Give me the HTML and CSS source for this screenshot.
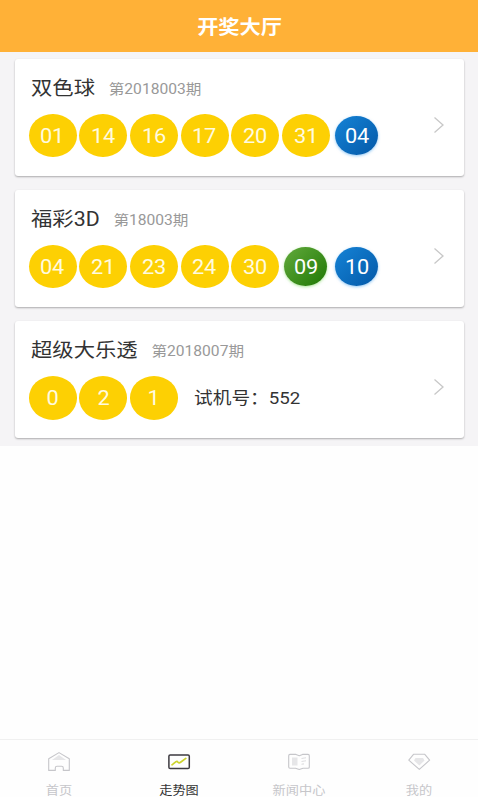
FILE: index.html
```
<!DOCTYPE html>
<html lang="zh-CN">
<head>
    <meta charset="UTF-8">
    <meta name="viewport" content="width=device-width, initial-scale=1.0">
    <title>开奖大厅</title>
    <link rel="stylesheet" href="styles.css">
</head>
<body>
    <header class="header">
        <h1>开奖大厅</h1>
    </header>

    <main class="list">
        <section class="card">
            <div class="card-head">
                <h2>双色球</h2>
                <span class="issue">第2018003期</span>
            </div>
            <div class="balls">
                <span class="ball"><b>01</b></span>
                <span class="ball"><b>14</b></span>
                <span class="ball"><b>16</b></span>
                <span class="ball"><b>17</b></span>
                <span class="ball"><b>20</b></span>
                <span class="ball"><b>31</b></span>
                <span class="ball small blue"><b>04</b></span>
            </div>
            <svg class="arrow" viewBox="0 0 12 18"><path d="M1.5 1.5 L10 9 L1.5 16.5"/></svg>
        </section>

        <section class="card">
            <div class="card-head">
                <h2>福彩3D</h2>
                <span class="issue">第18003期</span>
            </div>
            <div class="balls">
                <span class="ball"><b>04</b></span>
                <span class="ball"><b>21</b></span>
                <span class="ball"><b>23</b></span>
                <span class="ball"><b>24</b></span>
                <span class="ball"><b>30</b></span>
                <span class="ball small green"><b>09</b></span>
                <span class="ball small blue"><b>10</b></span>
            </div>
            <svg class="arrow" viewBox="0 0 12 18"><path d="M1.5 1.5 L10 9 L1.5 16.5"/></svg>
        </section>

        <section class="card">
            <div class="card-head">
                <h2>超级大乐透</h2>
                <span class="issue">第2018007期</span>
            </div>
            <div class="balls">
                <span class="ball"><b>0</b></span>
                <span class="ball"><b>2</b></span>
                <span class="ball"><b>1</b></span>
                <span class="test-num">试机号：552</span>
            </div>
            <svg class="arrow" viewBox="0 0 12 18"><path d="M1.5 1.5 L10 9 L1.5 16.5"/></svg>
        </section>
    </main>

    <nav class="tabbar">
        <a class="tab">
            <svg viewBox="0 0 24 22">
                <path class="fill" d="M12 4 L19 9 H5 Z"/>
                <path class="line" d="M1.7 7.8 L12 1.6 L22.3 7.8 V19.4 H16.3 V17 Q16.3 15.3 14.6 15.3 H10 Q8.3 15.3 8.3 17 V19.4 H1.7 Z"/>
            </svg>
            <span>首页</span>
        </a>
        <a class="tab active">
            <svg viewBox="0 0 24 22">
                <rect class="line" x="1.9" y="4" width="20.4" height="13.6" rx="1.3"/>
                <path class="trend" d="M5 13.8 L9 10.7 Q10.2 10 11 11.2 Q12.2 12.6 13.6 11.2 L18.8 7.4"/>
            </svg>
            <span>走势图</span>
        </a>
        <a class="tab">
            <svg viewBox="0 0 24 22">
                <path class="fill" d="M5 6.5 H10.5 V14.5 H5 Z"/>
                <path class="line thin" d="M14.5 7.5 L19 6.7 M14.5 10.5 L19 9.7 M14.5 13.3 L17 12.9"/>
                <path class="line" d="M3 3.4 H9 L12.3 4.7 L15.5 3.4 H21 Q22.3 3.4 22.3 4.7 V16.2 Q22.3 17.2 21 17.2 H16 L12.3 18.4 L8.5 17.2 H3 Q1.7 17.2 1.7 16 V4.7 Q1.7 3.4 3 3.4 Z"/>
            </svg>
            <span>新闻中心</span>
        </a>
        <a class="tab">
            <svg viewBox="0 0 24 22">
                <path class="fill" d="M8.5 7 H16 L17.5 9.5 L12.3 14.5 L7 9.5 Z"/>
                <path class="line" d="M6.5 3.3 H17.8 L22.6 9.2 L12.3 18.4 L1.8 9.2 Z"/>
            </svg>
            <span>我的</span>
        </a>
    </nav>
</body>
</html>
```
FILE: styles.css
```
* {
    box-sizing: border-box;
}
body {
    margin: 0;
    height: 797px;
    display: flex;
    flex-direction: column;
    overflow: hidden;
    background-color: #fefefe;
    color: #333;
    font-family: Roboto, "Noto Sans CJK SC", sans-serif;
}
.header {
    height: 52px;
    flex: none;
    display: flex;
    justify-content: center;
    padding: 14px 0 0 1px;
    background-color: #ffb137;
}
.header h1 {
    margin: 0;
    font-size: 19.3px;
    line-height: 28px;
    font-weight: bold;
    color: #fff;
    transform: scaleX(1.1);
}
.list {
    height: 394px;
    flex: none;
    display: flex;
    flex-direction: column;
    gap: 14.2px;
    padding: 7px 14.5px 0 15px;
    background-color: #f5f4f6;
}
.card {
    position: relative;
    height: 117px;
    padding: 16px 0 0 13.5px;
    background-color: #fff;
    border-radius: 3px;
    box-shadow: 0 1px 2px rgba(0, 0, 0, 0.3);
}
.card-head {
    display: flex;
    align-items: center;
    gap: 12.5px;
    height: 28px;
    width: 300px;
    margin-left: 2.5px;
    transform: scaleX(1.1);
    transform-origin: left center;
}
.card-head h2 {
    margin: 0;
    font-size: 19.4px;
    line-height: 28px;
    font-weight: normal;
}
.issue {
    font-size: 14.2px;
    line-height: 26px;
    padding-bottom: 1px;
    color: #999;
}
.balls {
    display: flex;
    align-items: center;
    gap: 2.7px;
    height: 44px;
    margin-top: 10.5px;
}
.ball {
    width: 48px;
    height: 43.5px;
    display: flex;
    align-items: center;
    justify-content: center;
    border-radius: 50%;
    background-color: #fdd003;
    color: #fffbe0;
    font-size: 19.8px;
}
.ball b {
    font-weight: normal;
    line-height: 24px;
    padding-top: 2px;
    transform: scaleX(1.1);
}
.ball.small {
    width: 43px;
    height: 39px;
    margin: 0 2.5px;
    color: #fff;
}
.ball.blue {
    background: linear-gradient(135deg, #1583d6, #0459a8);
    box-shadow: 0 1px 3px rgba(40, 150, 240, 0.5);
}
.ball.green {
    background: linear-gradient(135deg, #62aa3c, #1f7804);
    box-shadow: 0 1px 3px rgba(90, 210, 50, 0.5);
}
.test-num {
    margin-left: 13px;
    padding-top: 1px;
    font-size: 17px;
    line-height: 24px;
    transform: scaleX(1.1);
    transform-origin: left center;
}
.arrow {
    position: absolute;
    right: 19px;
    top: 57px;
    width: 12px;
    height: 18px;
    fill: none;
    stroke: #c8c8c8;
    stroke-width: 1.3;
}
.tabbar {
    height: 58px;
    flex: none;
    margin: auto -1px 0;
    display: flex;
    border-top: 1px solid #f0f0f0;
}
.tab {
    flex: 1;
    display: flex;
    flex-direction: column;
    align-items: center;
    padding-top: 10.5px;
    color: #c6c6ca;
}
.tab svg {
    width: 24px;
    height: 22px;
    flex: none;
}
.tab span {
    margin-top: 8.5px;
    font-size: 12px;
    line-height: 20px;
    white-space: nowrap;
    transform: scaleX(1.1);
}
.tab .line {
    fill: none;
    stroke: #c6c6ca;
    stroke-width: 1.1;
    stroke-linejoin: round;
}
.tab .line.thin {
    stroke: #dedee0;
}
.tab .fill {
    fill: #e6e6e8;
}
.tab .trend {
    fill: none;
    stroke: #cdd32c;
    stroke-width: 1.7;
    stroke-linecap: round;
}
.tab.active {
    color: #333;
}
.tab.active .line {
    stroke: #3c3a40;
    stroke-width: 1.5;
}
```
